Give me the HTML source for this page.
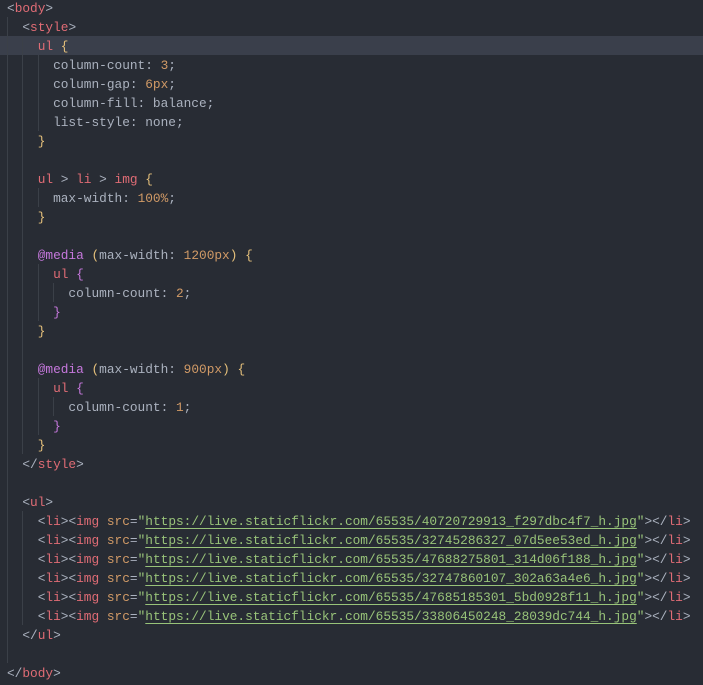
<!DOCTYPE html>
<html><head><style>
html,body{margin:0;padding:0;background:#282c34;width:703px;height:685px;overflow:hidden}
#c{position:absolute;left:7px;top:-1.5px;font-family:"Liberation Mono",monospace;font-size:12.8px;color:#abb2bf}
.l{height:19px;line-height:19px;position:relative;white-space:pre}
.hl{position:absolute;left:0;top:36px;width:703px;height:19px;background:#3a3f4b}
.g{position:absolute;width:1px;background:#3b4048}
.t{color:#e06c75}.y{color:#e5c07b}.o{color:#d19a66}.s{color:#98c379}.p{color:#c678dd}
.u{text-decoration:underline;text-decoration-color:#98c379;text-underline-offset:3px}
</style></head><body>
<div class="hl"></div>
<div class="g" style="left:7px;top:17px;height:646px"></div>
<div class="g" style="left:22px;top:36px;height:418px"></div>
<div class="g" style="left:22px;top:511px;height:114px"></div>
<div class="g" style="left:38px;top:55px;height:76px"></div>
<div class="g" style="left:38px;top:188px;height:19px"></div>
<div class="g" style="left:38px;top:264px;height:57px"></div>
<div class="g" style="left:38px;top:378px;height:57px"></div>
<div class="g" style="left:53px;top:283px;height:19px"></div>
<div class="g" style="left:53px;top:397px;height:19px"></div>
<div id="c">
<div class="l">&lt;<span class="t">body</span>&gt;</div>
<div class="l">  &lt;<span class="t">style</span>&gt;</div>
<div class="l">    <span class="t">ul</span> <span class="y">{</span></div>
<div class="l">      column-count: <span class="o">3</span>;</div>
<div class="l">      column-gap: <span class="o">6px</span>;</div>
<div class="l">      column-fill: balance;</div>
<div class="l">      list-style: none;</div>
<div class="l">    <span class="y">}</span></div>
<div class="l"> </div>
<div class="l">    <span class="t">ul</span> &gt; <span class="t">li</span> &gt; <span class="t">img</span> <span class="y">{</span></div>
<div class="l">      max-width: <span class="o">100%</span>;</div>
<div class="l">    <span class="y">}</span></div>
<div class="l"> </div>
<div class="l">    <span class="p">@media</span> <span class="y">(</span>max-width: <span class="o">1200px</span><span class="y">)</span> <span class="y">{</span></div>
<div class="l">      <span class="t">ul</span> <span class="p">{</span></div>
<div class="l">        column-count: <span class="o">2</span>;</div>
<div class="l">      <span class="p">}</span></div>
<div class="l">    <span class="y">}</span></div>
<div class="l"> </div>
<div class="l">    <span class="p">@media</span> <span class="y">(</span>max-width: <span class="o">900px</span><span class="y">)</span> <span class="y">{</span></div>
<div class="l">      <span class="t">ul</span> <span class="p">{</span></div>
<div class="l">        column-count: <span class="o">1</span>;</div>
<div class="l">      <span class="p">}</span></div>
<div class="l">    <span class="y">}</span></div>
<div class="l">  &lt;/<span class="t">style</span>&gt;</div>
<div class="l"> </div>
<div class="l">  &lt;<span class="t">ul</span>&gt;</div>
<div class="l">    &lt;<span class="t">li</span>&gt;&lt;<span class="t">img</span> <span class="o">src</span>=<span class="s">"<span class="u">https://live.staticflickr.com/65535/40720729913_f297dbc4f7_h.jpg</span>"</span>&gt;&lt;/<span class="t">li</span>&gt;</div>
<div class="l">    &lt;<span class="t">li</span>&gt;&lt;<span class="t">img</span> <span class="o">src</span>=<span class="s">"<span class="u">https://live.staticflickr.com/65535/32745286327_07d5ee53ed_h.jpg</span>"</span>&gt;&lt;/<span class="t">li</span>&gt;</div>
<div class="l">    &lt;<span class="t">li</span>&gt;&lt;<span class="t">img</span> <span class="o">src</span>=<span class="s">"<span class="u">https://live.staticflickr.com/65535/47688275801_314d06f188_h.jpg</span>"</span>&gt;&lt;/<span class="t">li</span>&gt;</div>
<div class="l">    &lt;<span class="t">li</span>&gt;&lt;<span class="t">img</span> <span class="o">src</span>=<span class="s">"<span class="u">https://live.staticflickr.com/65535/32747860107_302a63a4e6_h.jpg</span>"</span>&gt;&lt;/<span class="t">li</span>&gt;</div>
<div class="l">    &lt;<span class="t">li</span>&gt;&lt;<span class="t">img</span> <span class="o">src</span>=<span class="s">"<span class="u">https://live.staticflickr.com/65535/47685185301_5bd0928f11_h.jpg</span>"</span>&gt;&lt;/<span class="t">li</span>&gt;</div>
<div class="l">    &lt;<span class="t">li</span>&gt;&lt;<span class="t">img</span> <span class="o">src</span>=<span class="s">"<span class="u">https://live.staticflickr.com/65535/33806450248_28039dc744_h.jpg</span>"</span>&gt;&lt;/<span class="t">li</span>&gt;</div>
<div class="l">  &lt;/<span class="t">ul</span>&gt;</div>
<div class="l"> </div>
<div class="l">&lt;/<span class="t">body</span>&gt;</div>
</div>
</body></html>
